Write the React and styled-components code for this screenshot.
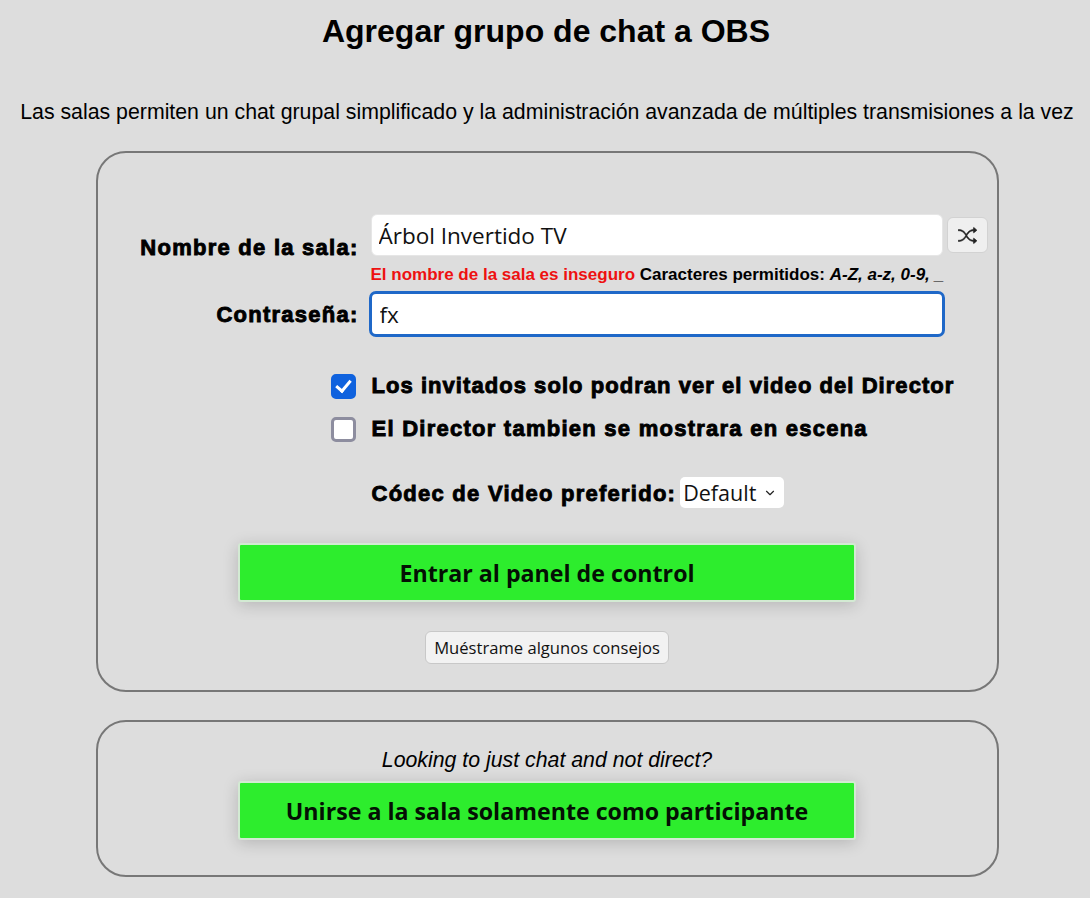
import React from 'react';
import styled, { createGlobalStyle } from 'styled-components';
import { ChevronDown } from 'lucide-react';
import { BsShuffle } from 'react-icons/bs';

const GlobalStyle = createGlobalStyle`
  html, body {
    margin: 0;
    padding: 0;
    background: #dddddd;
  }
  body {
    font-family: "Liberation Sans", Arial, sans-serif;
    color: #000;
  }
`;

function App() {
  return (
    <Page>
      <GlobalStyle />
      <Title>Agregar grupo de chat a OBS</Title>
      <Intro>
        Las salas permiten un chat grupal simplificado y la administración
        avanzada de múltiples transmisiones a la vez
      </Intro>

      <MainPanel>
        <FormGrid>
          <FieldLabel>Nombre de la sala:</FieldLabel>
          <InputRow>
            <TextField type="text" defaultValue="Árbol Invertido TV" />
            <ShuffleButton type="button" aria-label="Generar nombre">
              <BsShuffle size={19} stroke="currentColor" strokeWidth={0.5} />
            </ShuffleButton>
          </InputRow>

          <span />
          <Warning>
            <WarningRed>El nombre de la sala es inseguro</WarningRed> Caracteres
            permitidos: <em>A-Z, a-z, 0-9, _</em>
          </Warning>

          <PasswordLabel>Contraseña:</PasswordLabel>
          <PasswordField type="text" defaultValue="fx" />
        </FormGrid>

        <CheckList>
          <CheckRow>
            <CheckBox type="checkbox" defaultChecked />
            <BoldText $tight>Los invitados solo podran ver el video del Director</BoldText>
          </CheckRow>
          <CheckRow>
            <CheckBox type="checkbox" />
            <BoldText>El Director tambien se mostrara en escena</BoldText>
          </CheckRow>
        </CheckList>

        <CodecRow>
          <BoldText>Códec de Video preferido:</BoldText>
          <SelectWrap>
            <CodecSelect>
              <option>Default</option>
            </CodecSelect>
            <SelectArrow>
              <ChevronDown size={14} strokeWidth={2} />
            </SelectArrow>
          </SelectWrap>
        </CodecRow>

        <EnterButton type="button">Entrar al panel de control</EnterButton>

        <TipsButton type="button">Muéstrame algunos consejos</TipsButton>
      </MainPanel>

      <JoinPanel>
        <JoinHint>Looking to just chat and not direct?</JoinHint>
        <GreenButton type="button">Unirse a la sala solamente como participante</GreenButton>
      </JoinPanel>
    </Page>
  );
}

export default App;

const Page = styled.div`
  width: 1090px;
  height: 898px;
  overflow: hidden;
  box-sizing: border-box;
  padding-top: 14px;
  display: flex;
  flex-direction: column;
  align-items: center;
`;

const Title = styled.h1`
  margin: 0 0 0 2px;
  font-size: 32px;
  line-height: 34px;
  font-weight: 700;
`;

const Intro = styled.p`
  margin: 53px 0 0 4px;
  font-size: 21.3px;
  line-height: 22px;
  white-space: nowrap;
`;

const Panel = styled.section`
  box-sizing: border-box;
  width: 903px;
  margin-left: 4px;
  border: 2px solid #777777;
  border-radius: 30px;
  display: flex;
  flex-direction: column;
`;

const MainPanel = styled(Panel)`
  height: 541px;
  margin-top: 28px;
  padding-top: 61px;
`;

const JoinPanel = styled(Panel)`
  height: 157px;
  margin-top: 28px;
  padding-top: 27px;
  align-items: center;
`;

const FormGrid = styled.div`
  display: grid;
  grid-template-columns: 261px 1fr;
  column-gap: 12px;
  align-items: start;
`;

const BoldText = styled.span`
  font-size: 22px;
  line-height: 24px;
  font-weight: 700;
  letter-spacing: ${(p) => (p.$tight ? '1.05px' : '1.25px')};
  -webkit-text-stroke: 0.9px #000;
  white-space: nowrap;
`;

const FieldLabel = styled(BoldText).attrs({ as: 'label' })`
  text-align: right;
  padding-top: 22px;
`;

const PasswordLabel = styled(FieldLabel)`
  padding-top: 12px;
`;

const InputRow = styled.div`
  display: flex;
  align-items: center;
  gap: 4px;
`;

const TextField = styled.input`
  box-sizing: border-box;
  width: 572px;
  height: 42px;
  padding: 0 7px;
  border: 1px solid #e6e6e6;
  border-radius: 6px;
  background: #fff;
  font-family: "Open Sans", "Noto Sans", sans-serif;
  font-size: 22.5px;
  color: #111;
  outline: none;
`;

const PasswordField = styled(TextField)`
  width: 576px;
  height: 46px;
  margin-left: -2px;
  padding: 0 8px;
  border: 3px solid #1f68c8;
  border-radius: 7px;
`;

const ShuffleButton = styled.button`
  box-sizing: border-box;
  width: 41px;
  height: 36px;
  border: 1px solid #d2d2d2;
  border-radius: 6px;
  background: #efefef;
  color: #222;
  display: flex;
  align-items: center;
  justify-content: center;
  padding: 0;
`;

const Warning = styled.div`
  font-size: 17px;
  line-height: 18px;
  font-weight: 700;
  margin-top: 6px;
  margin-bottom: 7px;
  white-space: nowrap;
`;

const WarningRed = styled.span`
  color: #ee1111;
`;

const CheckList = styled.div`
  display: flex;
  flex-direction: column;
  gap: 19px;
  margin: 37px 0 0 233px;
`;

const CheckRow = styled.label`
  display: flex;
  align-items: center;
  gap: 16px;
  height: 24px;
`;

const CheckBox = styled.input`
  appearance: none;
  box-sizing: border-box;
  margin: 0;
  width: 25px;
  height: 25px;
  border: 3px solid #8d8d9f;
  border-radius: 5px;
  background: #fff;
  display: flex;
  align-items: center;
  justify-content: center;
  &:checked {
    border-color: #0f62de;
    background: #0f62de;
  }
  &:checked::after {
    content: '';
    width: 6px;
    height: 12px;
    margin-top: -3px;
    border: solid #fff;
    border-width: 0 3px 3px 0;
    transform: rotate(40deg);
  }
`;

const CodecRow = styled.div`
  display: flex;
  align-items: center;
  gap: 4px;
  margin: 37px 0 0 274px;
  height: 32px;
`;

const SelectWrap = styled.div`
  position: relative;
  width: 104px;
  height: 31px;
  margin-top: -3px;
`;

const CodecSelect = styled.select`
  appearance: none;
  box-sizing: border-box;
  display: block;
  width: 100%;
  height: 100%;
  border: 0;
  border-radius: 5px;
  background: #fff;
  font-family: "Open Sans", "Noto Sans", sans-serif;
  font-size: 21.5px;
  color: #111;
  padding: 0 0 0 3px;
`;

const SelectArrow = styled.span`
  position: absolute;
  right: 7px;
  top: 9px;
  display: flex;
  color: #222;
  pointer-events: none;
`;

const GreenButton = styled.button`
  box-sizing: border-box;
  width: 618px;
  height: 59px;
  flex: none;
  border: 2px solid #d3ead3;
  border-radius: 3px;
  background: #2ded2d;
  box-shadow: 0 3px 16px rgba(0, 0, 0, 0.18);
  font-family: "Open Sans", "Noto Sans", sans-serif;
  font-size: 23.2px;
  font-weight: 700;
  color: #041004;
  align-self: center;
  padding: 0;
`;

const EnterButton = styled(GreenButton)`
  margin-top: 33px;
`;

const TipsButton = styled.button`
  box-sizing: border-box;
  align-self: center;
  width: 244px;
  height: 33px;
  margin-top: 29px;
  border: 1px solid #c8c8c8;
  border-radius: 6px;
  background: #f2f2f2;
  font-family: "Open Sans", "Noto Sans", sans-serif;
  font-size: 16.6px;
  color: #111;
  padding: 0;
  white-space: nowrap;
`;

const JoinHint = styled.div`
  font-style: italic;
  font-size: 21.3px;
  line-height: 23px;
  margin-bottom: 9px;
`;
